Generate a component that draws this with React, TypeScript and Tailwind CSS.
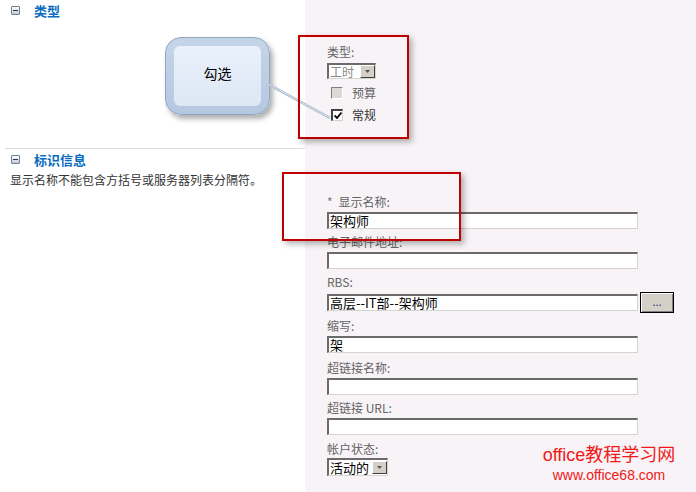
const font = { fontFamily: '"Noto Sans CJK SC", "Noto Sans", sans-serif' }

const Collapse = () => (
    <span className="inline-flex w-[9px] h-[9px] items-center justify-center border border-[#6f7f96] bg-gradient-to-b from-[#ffffff] to-[#c3cbd6] rounded-[1px]">
        <span className="w-[5px] h-[1px] bg-[#2b3a55]" />
    </span>
)

const Header = ({ title }: { title: string }) => (
    <div className="flex items-center h-[18px] pl-[11px] gap-[14px]">
        <Collapse />
        <span className="text-[13px] font-bold text-[#0a6cc0] leading-none">{title}</span>
    </div>
)

const TextBox = ({ value = '', w = 'w-[311px]' }: { value?: string; w?: string }) => (
    <div className={`${w} h-[17px] bg-white border-t-2 border-l-2 border-[#6a6a6a] border-b border-r border-b-[#d6d3ce] border-r-[#d6d3ce] text-[13px] leading-[14px] text-black pl-[1px] overflow-hidden whitespace-nowrap`}>
        {value}
    </div>
)

const Arrow = () => (
    <span className="w-[15px] h-[13px] bg-[#d4d0c8] border border-t-white border-l-white border-b-[#404040] border-r-[#404040] flex items-center justify-center">
        <svg width="5" height="3" viewBox="0 0 5 3"><path d="M0 0h5L2.5 3z" fill="#555" /></svg>
    </span>
)

const Label = ({ children }: { children: React.ReactNode }) => (
    <div className="h-[16px] text-[12px] leading-[16px] text-[#646464]">{children}</div>
)

const App = () => {
    return (
        <div className="relative w-[696px] h-[492px] bg-white overflow-hidden" style={font}>
            {/* Section 1 */}
            <div className="flex h-[148px]">
                <div className="w-[305px] pt-[1px]">
                    <Header title="类型" />
                </div>
                <div className="flex-1 bg-[#f7f3f6] pl-[22px] pt-[44px]">
                    <Label>类型:</Label>
                    <div className="mt-[3px] w-[49px] h-[16px] flex items-center bg-white border-t-2 border-l-2 border-[#6a6a6a] border-b border-r border-b-[#d6d3ce] border-r-[#d6d3ce]">
                        <span className="flex-1 text-[12px] leading-none text-[#8a8a8a] pl-[1px]">工时</span>
                        <Arrow />
                    </div>
                    <div className="mt-[7px] flex items-center gap-[9px] pl-[4px] h-[14px]">
                        <span className="w-[12px] h-[12px] bg-[#dcdad5] border-t border-l border-[#808080] border-b border-r border-b-white border-r-white" />
                        <span className="text-[12px] text-[#646464] leading-none">预算</span>
                    </div>
                    <div className="mt-[8px] flex items-center gap-[9px] pl-[4px] h-[14px]">
                        <span className="w-[12px] h-[12px] bg-white border-t-2 border-l-2 border-[#404040] border-b border-r border-b-[#d4d0c8] border-r-[#d4d0c8] flex items-center justify-center">
                            <svg width="8" height="7" viewBox="0 0 8 7"><path d="M0.5 3.5L3 6L7.5 0.5" stroke="#000" strokeWidth="1.8" fill="none" /></svg>
                        </span>
                        <span className="text-[12px] text-[#333] leading-none">常规</span>
                    </div>
                </div>
            </div>

            {/* Section 2 */}
            <div className="flex h-[344px]">
                <div className="w-[305px]">
                    <div className="ml-[5px] h-[1px] bg-[#dcdcdc]" />
                    <div className="pt-[1px]">
                        <Header title="标识信息" />
                    </div>
                    <div className="pl-[10px] pt-[4px] text-[12px] leading-[16px] text-[#333]">显示名称不能包含方括号或服务器列表分隔符。</div>
                </div>
                <div className="flex-1 bg-[#f7f3f6] pl-[22px] pt-[46px]">
                    <Label><span className="text-[#777] mr-[6px]">*</span>显示名称:</Label>
                    <div className="mt-[2px]"><TextBox value="架构师" /></div>
                    <div className="mt-[5px]"><Label>电子邮件地址:</Label></div>
                    <div className="mt-[2px]"><TextBox /></div>
                    <div className="mt-[5px]"><Label>RBS:</Label></div>
                    <div className="mt-[2px] flex items-center gap-[2px]">
                        <TextBox value="高层--IT部--架构师" />
                        <div className="w-[34px] h-[21px] bg-[#d4d0c8] border border-black shadow-[inset_1px_1px_0_#fff,inset_-1px_-1px_0_#808080] flex items-center justify-center text-[11px] text-[#1a3a8a] leading-none pb-[2px]">...</div>
                    </div>
                    <div className="mt-[5px]"><Label>缩写:</Label></div>
                    <div className="mt-[2px]"><TextBox value="架" /></div>
                    <div className="mt-[7px]"><Label>超链接名称:</Label></div>
                    <div className="mt-[2px]"><TextBox /></div>
                    <div className="mt-[5px]"><Label>超链接 URL:</Label></div>
                    <div className="mt-[2px]"><TextBox /></div>
                    <div className="mt-[6px]"><Label>帐户状态:</Label></div>
                    <div className="mt-[1px] w-[61px] h-[18px] flex items-center bg-white border-t-2 border-l-2 border-[#6a6a6a] border-b border-r border-b-[#d6d3ce] border-r-[#d6d3ce]">
                        <span className="flex-1 text-[13px] leading-none text-black pl-[1px]">活动的</span>
                        <Arrow />
                    </div>
                </div>
            </div>

            {/* callout */}
            <div className="absolute left-[165px] top-[37px] w-[105px] h-[78px] rounded-[16px] border border-[#8fa5c2] bg-gradient-to-b from-[#c5d5e9] to-[#b5c8e0] shadow-[3px_4px_5px_rgba(80,80,80,0.45)] p-[8px]">
                <div className="w-full h-full rounded-[6px] bg-gradient-to-b from-[#eaf1fa] to-[#dce7f5] flex items-center justify-center pb-[6px] text-[14px] text-black">勾选</div>
            </div>
            <svg className="absolute left-[268px] top-[80px]" width="70" height="45" viewBox="0 0 70 45">
                <path d="M0 4L62 38" stroke="#9fb2c8" strokeWidth="2.5" fill="none" />
                <path d="M0 4L62 38" stroke="#dfe8f3" strokeWidth="1" fill="none" />
            </svg>

            {/* red highlight boxes */}
            <div className="absolute left-[298px] top-[35px] w-[111px] h-[104px] border-2 border-[#c00000] shadow-[3px_3px_6px_rgba(0,0,0,0.3)]" />
            <div className="absolute left-[282px] top-[172px] w-[179px] h-[69px] border-2 border-[#c00000] shadow-[3px_3px_6px_rgba(0,0,0,0.3)]" />

            {/* watermark */}
            <div className="absolute left-[540px] top-[443px] w-[138px] flex flex-col items-center text-[#f01818]">
                <div className="text-[18px] leading-[24px] whitespace-nowrap" style={{ fontFamily: '"Liberation Sans", "Noto Sans CJK SC", sans-serif' }}>office教程学习网</div>
                <div className="text-[14px] leading-[16px] whitespace-nowrap" style={{ fontFamily: '"Liberation Sans", sans-serif' }}>www.office68.com</div>
            </div>
        </div>
    )
}

export default App
